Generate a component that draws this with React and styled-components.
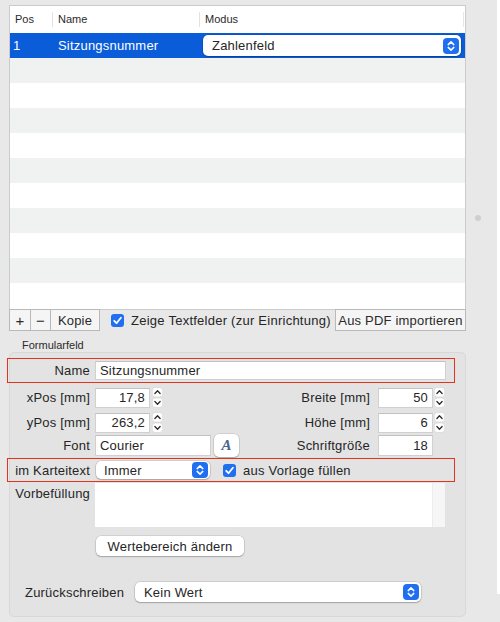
import React from "react";
import styled, { createGlobalStyle } from "styled-components";

const GlobalStyle = createGlobalStyle`
  html, body { margin: 0; padding: 0; background: #e8e8e8; }
  body {
    font-family: "Liberation Sans", Arial, sans-serif;
    font-size: 13px;
    color: #262626;
  }
  * { box-sizing: border-box; }
`;

const Page = styled.div`
  display: flex;
  width: 500px;
  height: 622px;
  overflow: hidden;
`;

const Main = styled.div`
  width: 466px;
  padding: 5px 0 0 9px;
  display: flex;
  flex-direction: column;
  flex-shrink: 0;
`;

const Side = styled.div`
  width: 31px;
  padding: 215px 0 0 9px;
  flex-shrink: 0;
`;

const Handle = styled.div`
  width: 6px;
  height: 6px;
  border-radius: 50%;
  background: #cfcfcf;
`;

const Sliver = styled.div`
  width: 3px;
  height: 594px;
  background: #ffffff;
  flex-shrink: 0;
`;

const TableBox = styled.div`
  height: 305px;
  border: 1px solid #cbcbcb;
  background: #fff;
  display: flex;
  flex-direction: column;
`;

const cols = "42px 147px 1fr";

const HeaderRow = styled.div`
  height: 27px;
  display: grid;
  grid-template-columns: ${cols};
  align-items: center;
  font-size: 11px;
  color: #2a2a2a;
`;

const HeaderCell = styled.div`
  height: 15px;
  line-height: 15px;
  padding-left: ${(p) => p.$pad}px;
  border-left: ${(p) => (p.$sep ? "1px solid #e2e2e2" : "none")};
  border-right: ${(p) => (p.$end ? "1px solid #e6e6e6" : "none")};
  margin-right: ${(p) => (p.$end ? "1px" : "0")};
`;

const Row = styled.div`
  height: 25px;
  flex-shrink: 0;
  display: grid;
  grid-template-columns: ${cols};
  align-items: center;
  background: ${(p) => (p.$selected ? "#0a5cd9" : p.$odd ? "#f0f1f1" : "#ffffff")};
  color: ${(p) => (p.$selected ? "#ffffff" : "#262626")};
  font-size: 13px;
  letter-spacing: 0.2px;
`;

const Cell = styled.div`
  padding-left: ${(p) => p.$pad}px;
  white-space: nowrap;
`;

const Popup = styled.div`
  display: flex;
  align-items: center;
  justify-content: space-between;
  width: ${(p) => p.$w}px;
  height: ${(p) => p.$h}px;
  background: #fff;
  color: #262626;
  border-radius: 5px;
  box-shadow: 0 0 0 0.5px rgba(0, 0, 0, 0.18), 0 1px 1.5px rgba(0, 0, 0, 0.22);
  padding: 0 2px 0 ${(p) => p.$pl ?? 9}px;
  flex-shrink: 0;
  letter-spacing: 0.2px;
`;

const ButtonBar = styled.div`
  display: flex;
  align-items: center;
  height: 22px;
  margin-top: -1px;
`;

const BarButton = styled.div`
  width: ${(p) => p.$w}px;
  height: 22px;
  margin-left: ${(p) => (p.$auto ? "auto" : p.$join ? "-1px" : "0")};
  border: 1px solid #b9b9b9;
  background: #f5f5f5;
  display: flex;
  align-items: center;
  justify-content: center;
  font-size: ${(p) => p.$fs ?? 13}px;
  color: #2a2a2a;
  letter-spacing: 0.2px;
  flex-shrink: 0;
`;

const CheckLabel = styled.span`
  margin-left: 7px;
  letter-spacing: 0.25px;
  white-space: nowrap;
`;

const CheckWrap = styled.span`
  display: inline-flex;
  margin-left: ${(p) => p.$ml ?? 0}px;
  flex-shrink: 0;
`;

const GroupTitle = styled.div`
  font-size: 11px;
  height: 13px;
  line-height: 13px;
  margin: 8px 0 0 13px;
  color: #2a2a2a;
`;

const GroupBox = styled.div`
  height: 265px;
  background: #e3e3e3;
  border: 1px solid #d8d8d8;
  border-radius: 5px;
  display: flex;
  flex-direction: column;
  padding-top: 5px;
`;

const RedRow = styled.div`
  margin-left: -3px;
  margin-top: ${(p) => p.$mt ?? 0}px;
  width: 448px;
  height: ${(p) => p.$h}px;
  border: 1px solid #e4331c;
  display: flex;
  align-items: center;
  flex-shrink: 0;
`;

const FieldRow = styled.div`
  display: flex;
  align-items: ${(p) => (p.$top ? "flex-start" : "center")};
  height: ${(p) => p.$h}px;
  margin-top: ${(p) => p.$mt ?? 0}px;
  padding-left: ${(p) => p.$pl ?? 0}px;
  padding-right: ${(p) => p.$pr ?? 0}px;
  flex-shrink: 0;
`;

const Label = styled.div`
  width: ${(p) => p.$w}px;
  text-align: ${(p) => (p.$left ? "left" : "right")};
  padding-top: ${(p) => p.$pt ?? 0}px;
  flex-shrink: 0;
  flex-grow: ${(p) => (p.$grow ? 1 : 0)};
  margin-right: ${(p) => p.$mr ?? 5}px;
  white-space: nowrap;
  letter-spacing: 0.2px;
`;

const TextInput = styled.div`
  width: ${(p) => p.$w}px;
  height: ${(p) => p.$h}px;
  background: #fff;
  border: 1px solid #d0d0d0;
  border-top-color: #c2c2c2;
  padding: 0 4px;
  display: flex;
  align-items: center;
  justify-content: ${(p) => (p.$right ? "flex-end" : "flex-start")};
  flex-shrink: 0;
  letter-spacing: 0.2px;
  white-space: nowrap;
`;

const StepperWrap = styled.span`
  display: inline-flex;
  margin-left: ${(p) => p.$ml}px;
  flex-shrink: 0;
`;

const FontButton = styled.div`
  width: 25px;
  height: 23px;
  margin-left: 3px;
  background: #fff;
  border-radius: 5px;
  box-shadow: 0 0 0 0.5px rgba(0, 0, 0, 0.16), 0 1px 1.5px rgba(0, 0, 0, 0.2);
  display: flex;
  align-items: center;
  justify-content: center;
  font-family: "Liberation Serif", "Times New Roman", serif;
  font-style: italic;
  font-weight: bold;
  font-size: 15px;
  color: #4a6591;
  flex-shrink: 0;
`;

const TextArea = styled.div`
  width: 350px;
  height: 44px;
  background: #fff;
  display: flex;
  justify-content: flex-end;
  flex-shrink: 0;
`;

const AreaScroller = styled.div`
  width: 13px;
  height: 100%;
  background: #f6f6f6;
  border-left: 1px solid #ececec;
`;

const PushButton = styled.div`
  width: 148px;
  height: 20px;
  margin: 9px 0 0 86px;
  background: #fff;
  border-radius: 5px;
  box-shadow: 0 0 0 0.5px rgba(0, 0, 0, 0.16), 0 1px 1.5px rgba(0, 0, 0, 0.22);
  display: flex;
  align-items: center;
  justify-content: center;
  letter-spacing: 0.2px;
  flex-shrink: 0;
`;

const PopupChevron = () => (
  <svg width="16" height="16" viewBox="0 0 16 16">
    <rect x="0" y="0" width="16" height="16" rx="4" fill="#1f6ff0" />
    <path d="M5.2 6.6 L8 3.9 L10.8 6.6" fill="none" stroke="#fff" strokeWidth="1.5" strokeLinecap="round" strokeLinejoin="round" />
    <path d="M5.2 9.4 L8 12.1 L10.8 9.4" fill="none" stroke="#fff" strokeWidth="1.5" strokeLinecap="round" strokeLinejoin="round" />
  </svg>
);

const Stepper = () => (
  <svg width="11" height="21" viewBox="0 0 11 21">
    <rect x="0.3" y="0.5" width="10.4" height="9.5" rx="3" fill="#fff" stroke="#d2d2d2" strokeWidth="0.6" />
    <rect x="0.3" y="11" width="10.4" height="9.5" rx="3" fill="#fff" stroke="#d2d2d2" strokeWidth="0.6" />
    <path d="M2.9 6.5 L5.5 3.8 L8.1 6.5" fill="none" stroke="#2a2a2a" strokeWidth="1.3" strokeLinecap="round" strokeLinejoin="round" />
    <path d="M2.9 14.5 L5.5 17.2 L8.1 14.5" fill="none" stroke="#2a2a2a" strokeWidth="1.3" strokeLinecap="round" strokeLinejoin="round" />
  </svg>
);

const Check = () => (
  <svg width="13" height="13" viewBox="0 0 13 13">
    <rect x="0" y="0" width="13" height="13" rx="3" fill="#1f6ff0" />
    <path d="M3.2 6.8 L5.5 9.2 L9.9 3.7" fill="none" stroke="#fff" strokeWidth="1.8" strokeLinecap="round" strokeLinejoin="round" />
  </svg>
);

export default function App() {
  const emptyRows = Array.from({ length: 10 }, (_, i) => i);
  return (
    <>
      <GlobalStyle />
      <Page>
        <Main>
          <TableBox>
            <HeaderRow>
              <HeaderCell $pad={5}>Pos</HeaderCell>
              <HeaderCell $pad={5} $sep>Name</HeaderCell>
              <HeaderCell $pad={5} $sep $end>Modus</HeaderCell>
            </HeaderRow>
            <Row $selected>
              <Cell $pad={3}>1</Cell>
              <Cell $pad={6}>Sitzungsnummer</Cell>
              <Cell $pad={4}>
                <Popup $w={258} $h={21}>
                  Zahlenfeld
                  <PopupChevron />
                </Popup>
              </Cell>
            </Row>
            {emptyRows.map((i) => (
              <Row key={i} $odd={i % 2 === 0} />
            ))}
          </TableBox>
          <ButtonBar>
            <BarButton $w={22} $fs={15}>+</BarButton>
            <BarButton $w={21} $join $fs={15}>−</BarButton>
            <BarButton $w={50} $join>Kopie</BarButton>
            <CheckWrap $ml={11}>
              <Check />
            </CheckWrap>
            <CheckLabel>Zeige Textfelder (zur Einrichtung)</CheckLabel>
            <BarButton $w={131} $auto>Aus PDF importieren</BarButton>
          </ButtonBar>
          <GroupTitle>Formularfeld</GroupTitle>
          <GroupBox>
            <RedRow $h={25}>
              <Label $w={82}>Name</Label>
              <TextInput $w={351} $h={19}>Sitzungsnummer</TextInput>
            </RedRow>
            <FieldRow $h={21} $mt={4} $pr={20}>
              <Label $w={80}>xPos [mm]</Label>
              <TextInput $w={55} $h={20} $right>17,8</TextInput>
              <StepperWrap $ml={2}><Stepper /></StepperWrap>
              <Label $w={10} $grow $mr={8}>Breite [mm]</Label>
              <TextInput $w={55} $h={20} $right>50</TextInput>
              <StepperWrap $ml={1}><Stepper /></StepperWrap>
            </FieldRow>
            <FieldRow $h={21} $mt={4} $pr={20}>
              <Label $w={80}>yPos [mm]</Label>
              <TextInput $w={55} $h={20} $right>263,2</TextInput>
              <StepperWrap $ml={2}><Stepper /></StepperWrap>
              <Label $w={10} $grow $mr={8}>Höhe [mm]</Label>
              <TextInput $w={55} $h={20} $right>6</TextInput>
              <StepperWrap $ml={1}><Stepper /></StepperWrap>
            </FieldRow>
            <FieldRow $h={23} $mt={1} $pr={32}>
              <Label $w={80}>Font</Label>
              <TextInput $w={116} $h={21}>Courier</TextInput>
              <FontButton>A</FontButton>
              <Label $w={10} $grow $mr={8}>Schriftgröße</Label>
              <TextInput $w={55} $h={21} $right>18</TextInput>
            </FieldRow>
            <RedRow $h={24} $mt={1}>
              <Label $w={82} $mr={6}>im Karteitext</Label>
              <Popup $w={114} $h={18} $pl={8}>
                Immer
                <PopupChevron />
              </Popup>
              <CheckWrap $ml={13}>
                <Check />
              </CheckWrap>
              <CheckLabel>aus Vorlage füllen</CheckLabel>
            </RedRow>
            <FieldRow $h={44} $mt={1} $top>
              <Label $w={80} $pt={3}>Vorbefüllung</Label>
              <TextArea>
                <AreaScroller />
              </TextArea>
            </FieldRow>
            <PushButton>Wertebereich ändern</PushButton>
            <FieldRow $h={20} $mt={26} $pl={15}>
              <Label $w={102} $left $mr={8}>Zurückschreiben</Label>
              <Popup $w={286} $h={20}>
                Kein Wert
                <PopupChevron />
              </Popup>
            </FieldRow>
          </GroupBox>
        </Main>
        <Side>
          <Handle />
        </Side>
        <Sliver />
      </Page>
    </>
  );
}
